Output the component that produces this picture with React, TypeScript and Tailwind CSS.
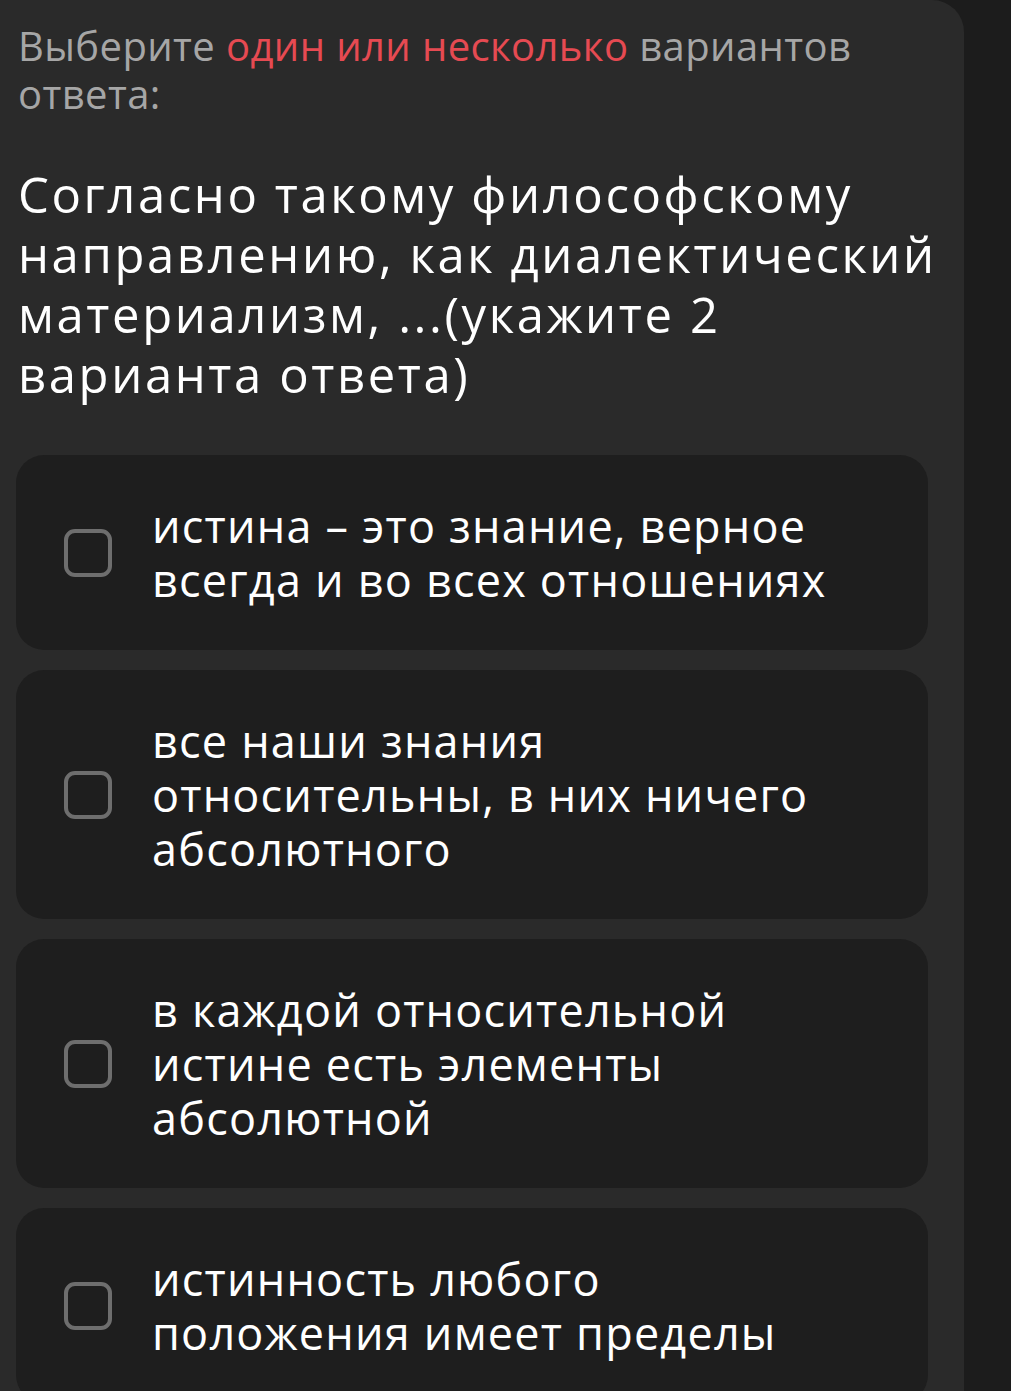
import React from 'react';

const options = [
  ['истина – это знание, верное', 'всегда и во всех отношениях'],
  ['все наши знания', 'относительны, в них ничего', 'абсолютного'],
  ['в каждой относительной', 'истине есть элементы', 'абсолютной'],
  ['истинность любого', 'положения имеет пределы'],
];

const font = { fontFamily: '"Open Sans", "Noto Sans", sans-serif' };

export default function App() {
  return (
    <div className="flex h-[1391px] overflow-hidden bg-[#1c1c1c]" style={font}>
      <div className="w-[964px] shrink-0 rounded-tr-[32px] bg-[#2a2a2a]">
        {/* подсказка */}
        <p className="px-[18px] pt-[22px] text-[40px] leading-[48px] tracking-[0.4px] text-[#a6a6a6]">
          Выберите <span className="text-[#e64a52]">один или несколько</span> вариантов
          <br />
          ответа:
        </p>

        {/* вопрос */}
        <h1 className="mt-[46px] px-[18px] text-[49px] font-medium leading-[60px] tracking-[2.6px] text-white">
          Согласно такому философскому
          <br />
          направлению, как диалектический
          <br />
          материализм, ...(укажите 2
          <br />
          варианта ответа)
        </h1>

        {/* варианты */}
        <div className="mt-[51px] flex flex-col gap-5 pl-4 pr-[36px]">
          {options.map((lines, i) => (
            <label
              key={i}
              className="flex items-center gap-10 rounded-[28px] bg-[#1e1e1e] pt-[44px] pb-[43px] pl-12 pr-6"
            >
              <span className="h-12 w-12 shrink-0 rounded-[11px] border-4 border-[#6e6e6e]" />
              <span className="text-[45px] leading-[54px] tracking-[1.2px] text-white">
                {lines.map((l, j) => (
                  <span key={j} className="block">
                    {l}
                  </span>
                ))}
              </span>
            </label>
          ))}
        </div>
      </div>
    </div>
  );
}
